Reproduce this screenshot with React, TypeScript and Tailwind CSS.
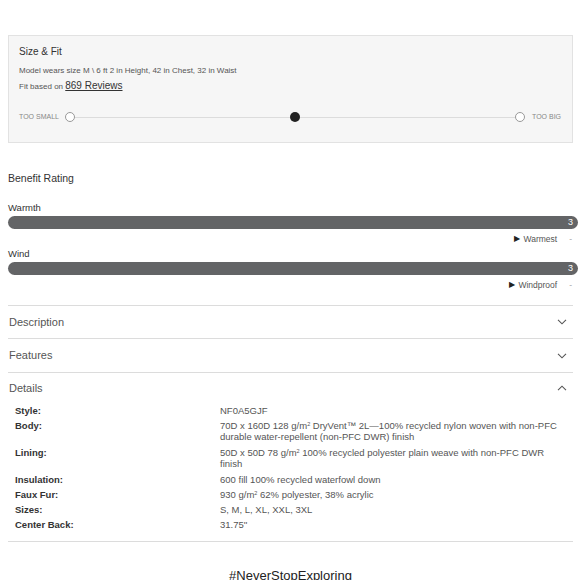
import React from "react";

const Chevron = ({ up = false }: { up?: boolean }) => (
  <svg width="10" height="6" viewBox="0 0 10 6" className="text-[#555]">
    <path
      d={up ? "M1 5.2L5 1.2L9 5.2" : "M1 0.8L5 4.8L9 0.8"}
      fill="none"
      stroke="currentColor"
      strokeWidth="1.1"
    />
  </svg>
);

const RatingBar = ({ label, end }: { label: string; end: string }) => (
  <div>
    <div className="text-[9.5px] leading-[12px] text-[#333]">{label}</div>
    <div className="mt-[2px] flex h-[13px] w-[570px] items-center justify-end rounded-full bg-[#636466] pr-[5px] text-[9px] text-white">
      3
    </div>
    <div className="mt-[5px] flex h-[10px] w-[570px] items-center justify-end pr-[6px] text-[8.5px] leading-[10px] text-[#555]">
      <span className="mr-[3px] text-[8px] text-[#222]">▶</span>
      <span>{end}</span>
      <span className="ml-[12px] text-[#aaa]">-</span>
    </div>
  </div>
);

const details: [string, React.ReactNode, boolean?][] = [
  ["Style:", "NF0A5GJF"],
  [
    "Body:",
    <>
      70D x 160D 128 g/m<sup className="text-[5.5px]">2</sup> DryVent™ 2L—100% recycled nylon woven with non-PFC
      <br />
      durable water-repellent (non-PFC DWR) finish
    </>,
    true,
  ],
  [
    "Lining:",
    <>
      50D x 50D 78 g/m<sup className="text-[5.5px]">2</sup> 100% recycled polyester plain weave with non-PFC DWR
      <br />
      finish
    </>,
    true,
  ],
  ["Insulation:", "600 fill 100% recycled waterfowl down"],
  [
    "Faux Fur:",
    <>
      930 g/m<sup className="text-[5.5px]">2</sup> 62% polyester, 38% acrylic
    </>,
  ],
  ["Sizes:", "S, M, L, XL, XXL, 3XL"],
  ["Center Back:", "31.75''"],
];

export default function App() {
  return (
    <div
      className="h-[580px] w-[580px] overflow-hidden bg-white pl-2 pt-[35px]"
      style={{ fontFamily: '"Liberation Sans", Arial, sans-serif' }}
    >
      {/* size & fit */}
      <div className="h-[108px] w-[565px] border border-[#e2e2e2] bg-[#f6f6f6] px-[10px] pt-[10px]">
        <div className="text-[10px] leading-[12px] text-[#333]">Size &amp; Fit</div>
        <div className="mt-[7px] text-[8px] leading-[12px] text-[#555]">
          Model wears size M \ 6 ft 2 in Height, 42 in Chest, 32 in Waist
        </div>
        <div className="mt-[2px] text-[8px] leading-[14px] text-[#555]">
          Fit based on <span className="text-[10px] text-[#333] underline">869 Reviews</span>
        </div>
        <div className="mt-[17px] flex h-[12px] items-center pr-[1px]">
          <span className="w-[38px] whitespace-nowrap text-[7px] text-[#888]">TOO SMALL</span>
          <span className="ml-[8px] h-[10px] w-[10px] rounded-full border border-[#999] bg-white" />
          <span className="h-px flex-1 bg-[#dcdcdc]" />
          <span className="h-[10px] w-[10px] rounded-full bg-[#222]" />
          <span className="h-px flex-1 bg-[#dcdcdc]" />
          <span className="h-[10px] w-[10px] rounded-full border border-[#999] bg-white" />
          <span className="ml-[7px] w-[29px] whitespace-nowrap text-[7px] text-[#888]">TOO BIG</span>
        </div>
      </div>

      {/* benefit rating */}
      <div className="mt-[28px] text-[10.5px] leading-[14px] text-[#333]">Benefit Rating</div>
      <div className="mt-[17px] flex flex-col gap-[5px]">
        <RatingBar label="Warmth" end="Warmest" />
        <div className="-mt-[1px]">
          <RatingBar label="Wind" end="Windproof" />
        </div>
      </div>

      {/* accordions */}
      <div className="mt-[15px] w-[565px]">
        <div className="h-px bg-[#dcdcdc]" />
        <div className="flex h-[32px] items-center justify-between pl-px pr-[6px] text-[11px] text-[#555]">
          Description
          <Chevron />
        </div>
        <div className="h-px bg-[#dcdcdc]" />
        <div className="flex h-[33px] items-center justify-between pl-px pr-[6px] text-[11px] text-[#555]">
          Features
          <Chevron />
        </div>
        <div className="h-px bg-[#dcdcdc]" />
        <div className="flex h-[30px] items-center justify-between pl-px pr-[6px] text-[11px] text-[#555]">
          Details
          <Chevron up />
        </div>
        <div className="flex flex-col pl-[7px]">
          {details.map(([label, value, two]) => (
            <div key={label} className={`flex py-[2px] text-[9.5px] leading-[11px] ${two ? "pb-[3px]" : ""}`}>
              <div className="w-[205px] shrink-0 font-bold text-[#333]">{label}</div>
              <div className="whitespace-nowrap text-[#555]">{value}</div>
            </div>
          ))}
        </div>
        <div className="mt-[9px] h-px bg-[#dcdcdc]" />
      </div>

      <div className="mt-[26px] w-[565px] text-center text-[13px] leading-[16px] text-[#222]">
        #NeverStopExploring
      </div>
    </div>
  );
}
